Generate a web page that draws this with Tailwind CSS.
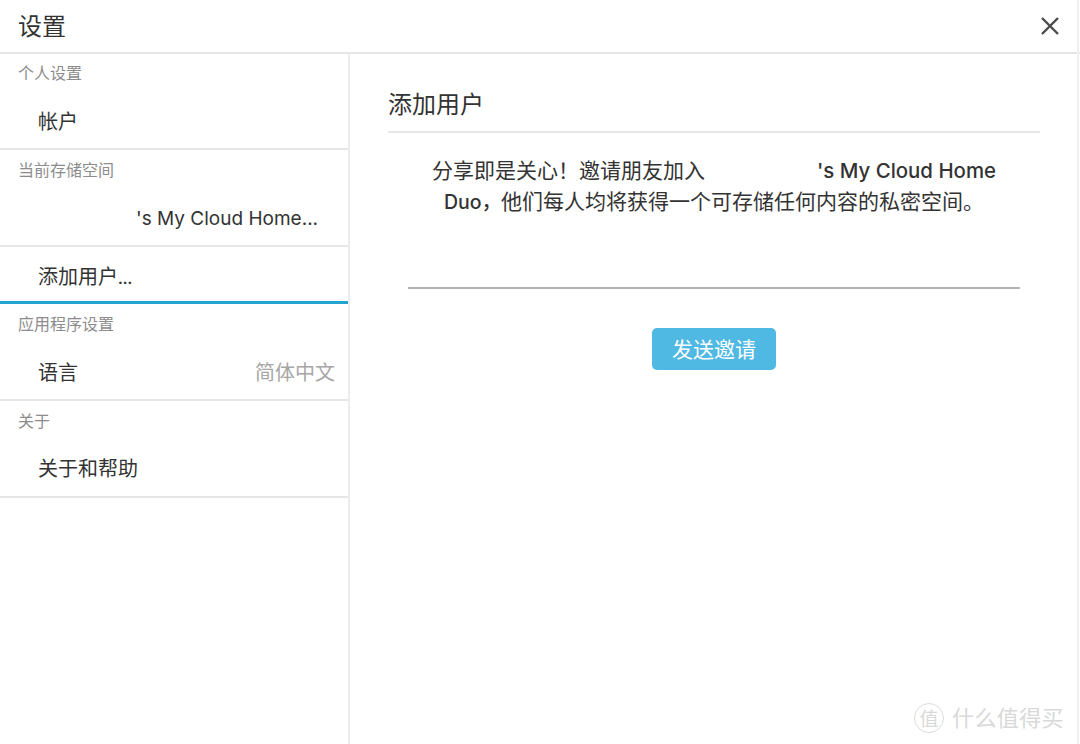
<!DOCTYPE html>
<html lang="zh">
<head>
<meta charset="utf-8">
<script src="https://cdn.jsdelivr.net/npm/@tailwindcss/browser@4"></script>
</head>
<body class="bg-white">
<div class="relative w-[1080px] h-[744px] overflow-hidden bg-white text-[#333] font-['Lato','Noto_Sans_CJK_SC',sans-serif]">
  <header class="h-[54px] flex items-center justify-between border-b-2 border-[#e6e6e6] pl-[18px] pr-[20px]">
    <h1 class="text-[24px] leading-[50px] font-normal -mt-[1px]">设置</h1>
    <svg class="w-[20px] h-[20px]" viewBox="0 0 20 20" fill="none" stroke="#4a4a4a" stroke-width="2.4"><path d="M2 2 18 18M18 2 2 18"/></svg>
  </header>
  <div class="flex h-[690px]">
    <aside class="w-[350px] border-r-2 border-[#ececec] shrink-0">
      <section class="h-[96px] border-b-2 border-[#e6e6e6]">
        <div class="pl-[18px] pt-[8px] h-[40px] text-[16px] leading-[22px] text-[#8c8c8c]">个人设置</div>
        <div class="pl-[38px] h-[54px] text-[20px] leading-[55px] text-[#333]">帐户</div>
      </section>
      <section class="h-[97px] border-b-2 border-[#e6e6e6]">
        <div class="pl-[18px] pt-[9px] h-[40px] text-[16px] leading-[22px] text-[#8c8c8c]">当前存储空间</div>
        <div class="pl-[136px] h-[55px] text-[19px] leading-[58px] text-[#333] font-['Inter','Noto_Sans_CJK_SC',sans-serif]">'s My Cloud Home...</div>
      </section>
      <section class="h-[57px] border-b-[3px] border-[#1fa5d0]">
        <div class="pl-[38px] h-[54px] text-[20px] leading-[58px] text-[#333]">添加用户...</div>
      </section>
      <section class="h-[97px] border-b-2 border-[#e6e6e6]">
        <div class="pl-[18px] pt-[9px] h-[40px] text-[16px] leading-[22px] text-[#8c8c8c]">应用程序设置</div>
        <div class="pl-[38px] pr-[13px] h-[55px] flex justify-between text-[20px] leading-[56px] text-[#333]"><span>语言</span><span class="text-[#a6a6a6]">简体中文</span></div>
      </section>
      <section class="h-[97px] border-b-2 border-[#e6e6e6]">
        <div class="pl-[18px] pt-[9px] h-[40px] text-[16px] leading-[22px] text-[#8c8c8c]">关于</div>
        <div class="pl-[38px] h-[55px] text-[20px] leading-[55px] text-[#333]">关于和帮助</div>
      </section>
    </aside>
    <main class="flex-1 pl-[38px] pr-[40px]">
      <h2 class="h-[79px] border-b-2 border-[#e6e6e6] pt-[32px] text-[24px] leading-[36px] font-normal">添加用户</h2>
      <p class="mt-[22px] text-center text-[21px] leading-[30px] text-[#333]">
        <span>分享即是关心！邀请朋友加入</span><span class="inline-block w-[112px]"></span><span class="font-['Inter','Noto_Sans_CJK_SC',sans-serif] text-[20.4px] font-medium">'s My Cloud Home</span><br>
        <span class="font-['Inter','Noto_Sans_CJK_SC',sans-serif] text-[19.5px] font-medium">Duo，</span>他们每人均将获得一个可存储任何内容的私密空间。
      </p>
      <div class="mt-[70px] mx-[20px] border-b-2 border-[#b3b3b3]"></div>
      <div class="mt-[39px] flex justify-center">
        <button class="w-[124px] h-[42px] rounded-[5px] bg-[#4fb8e3] text-white text-[21px] leading-[42px]">发送邀请</button>
      </div>
    </main>
  </div>
  <div class="absolute right-[1px] top-0 bottom-0 w-[2px] bg-[#f0f0f0]"></div>
  <div class="absolute left-[914px] top-[703px] flex items-center gap-[8px] text-[#d9d9d9]">
    <span class="w-[30px] h-[30px] rounded-full border border-[#dcdcdc] flex items-center justify-center text-[19px] leading-none">值</span>
    <span class="text-[22px] leading-[30px] tracking-[0.4px]">什么值得买</span>
  </div>
</div>
</body>
</html>
